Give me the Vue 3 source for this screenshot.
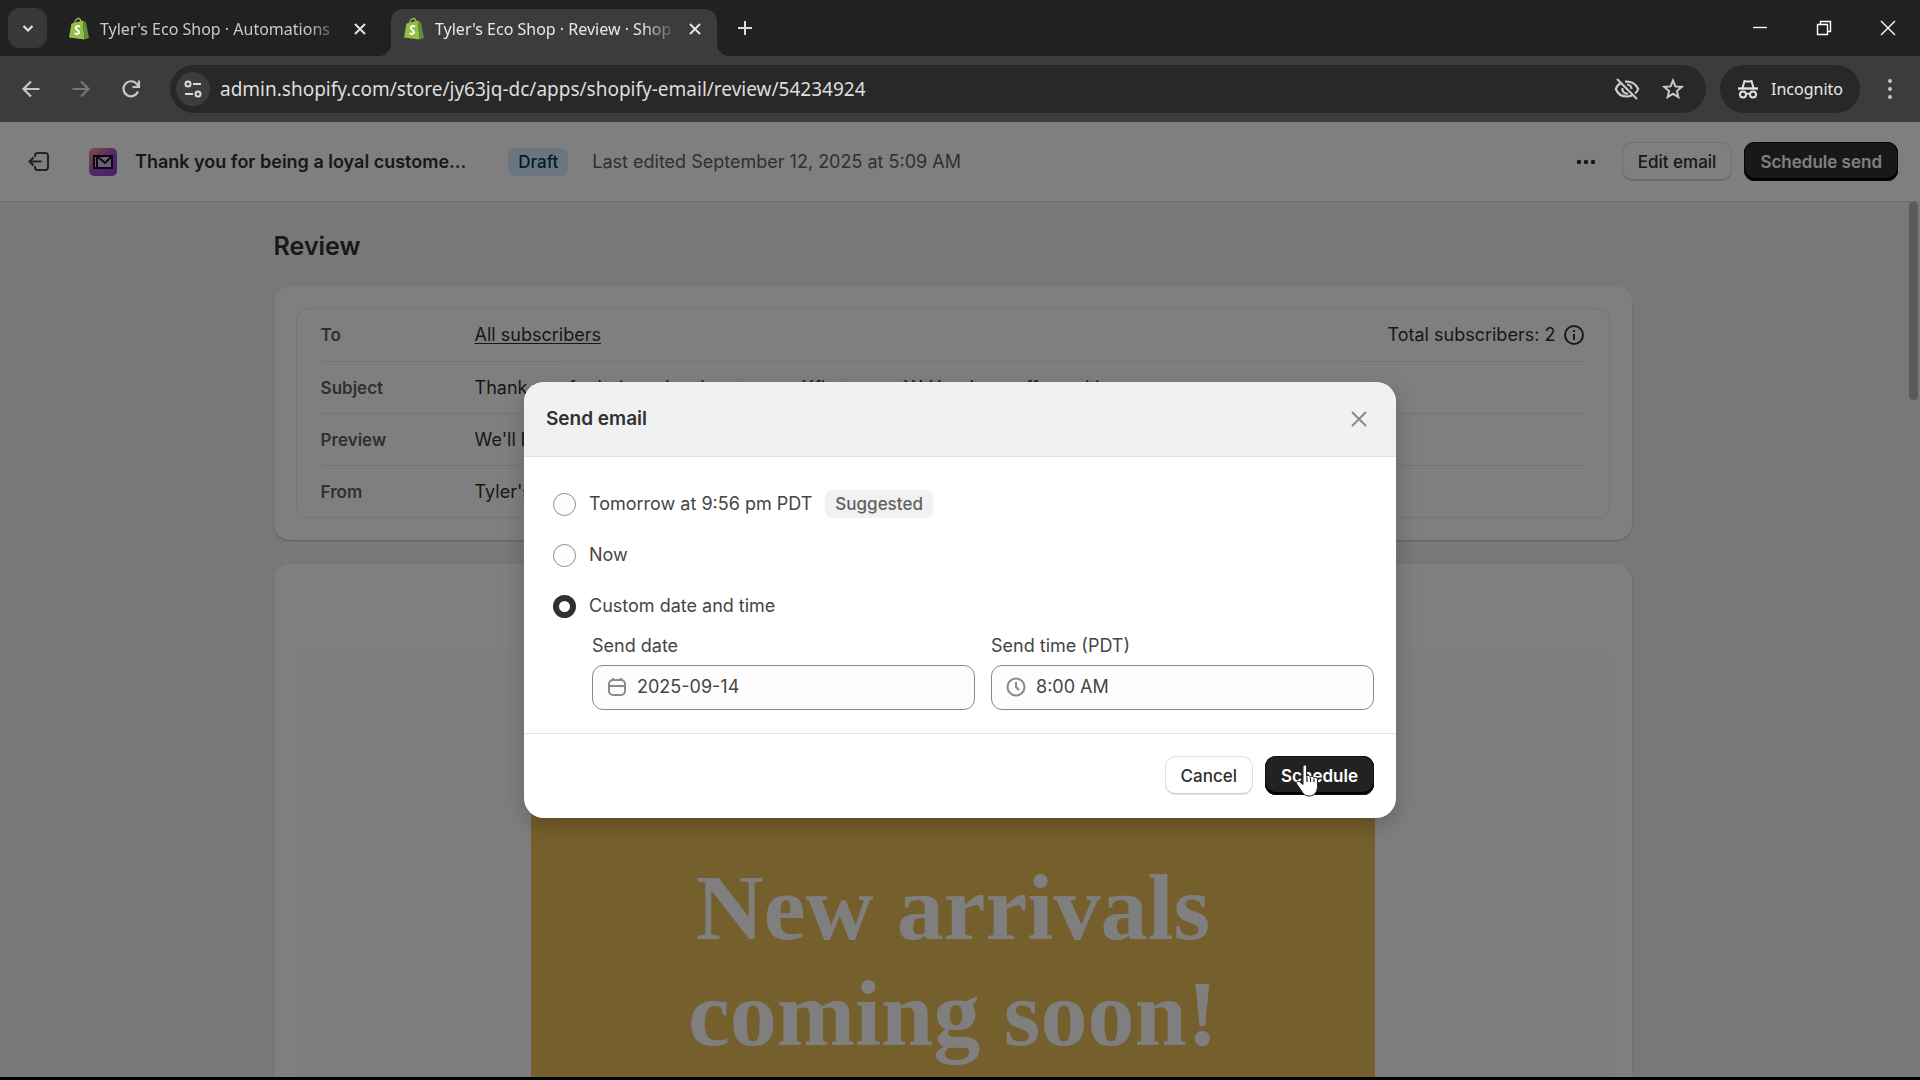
<template>
	<div class="window">
		<div class="tabstrip">
			<button class="tab-search" aria-label="Search tabs">
				<svg width="14" height="14" viewBox="0 0 14 14"><path d="M2.5 5l4.500 4.500L11.500 5" fill="none" stroke="#e3e3e3" stroke-width="2.200" /></svg>
			</button>
			<div v-for="tab in tabs" :key="tab.title" class="tab" :class="{ 'tab--active': tab.active }">
				<svg class="tab__favicon" width="22" height="24" viewBox="0 0 22 24">
					<path d="M3.500 6.500L15 3.500l1.500 19L1 20.500z" fill="#95bf47" />
					<path d="M15 3.500l3 2L21 21l-4.500 1.500z" fill="#5e8e3e" />
					<path d="M6.500 7c0-3 2-5.500 4-5.500 1.500 0 2.300 1.500 2.300 4" fill="none" stroke="#95bf47" stroke-width="1.300" />
					<path d="M12 9.500c-2-1-4.300-.3-4.300 1.500 0 2 3.300 2 3.300 4.200 0 1.900-2.400 2.200-4.200 1" fill="none" stroke="#fff" stroke-width="2" />
				</svg>
				<span class="tab__title">{{ tab.title }}</span>
				<button class="tab__close" aria-label="Close tab">
					<svg width="14" height="14" viewBox="0 0 14 14"><path d="M2 2l10 10M12 2L2 12" stroke="#e3e3e3" stroke-width="2" /></svg>
				</button>
			</div>
			<button class="new-tab" aria-label="New tab">
				<svg width="16" height="16" viewBox="0 0 16 16"><path d="M8 1v14M1 8h14" stroke="#dcdcdc" stroke-width="2" /></svg>
			</button>
			<div class="window-controls">
				<button aria-label="Minimize"><svg width="16" height="16" viewBox="0 0 16 16"><path d="M1 7.500h14" stroke="#fff" stroke-width="1.300" /></svg></button>
				<button aria-label="Restore"><svg width="16" height="16" viewBox="0 0 16 16"><path d="M1.500 4.500h10v10h-10zM4.500 4.500v-3h10v10h-3" fill="none" stroke="#fff" stroke-width="1.400" /></svg></button>
				<button aria-label="Close"><svg width="16" height="16" viewBox="0 0 16 16"><path d="M1 1l14 14M15 1L1 15" stroke="#fff" stroke-width="1.400" /></svg></button>
			</div>
		</div>

		<div class="toolbar">
			<button class="nav-button" aria-label="Back">
				<svg width="20" height="20" viewBox="0 0 20 20"><path d="M18.500 10H3M10 2.500L2.500 10l7.500 7.500" fill="none" stroke="#c7c7c7" stroke-width="2.200" /></svg>
			</button>
			<button class="nav-button" aria-label="Forward">
				<svg width="20" height="20" viewBox="0 0 20 20"><path d="M1.500 10H17M10 2.500l7.500 7.500-7.500 7.500" fill="none" stroke="#777" stroke-width="2.200" /></svg>
			</button>
			<button class="nav-button" aria-label="Reload">
				<svg width="20" height="20" viewBox="0 0 20 20"><path d="M17 12.500A7.500 7.500 0 1 1 15.800 5L18 7.500M18 1.500V8h-6.500" fill="none" stroke="#c7c7c7" stroke-width="2.200" /></svg>
			</button>
			<div class="omnibox">
				<button class="site-info" aria-label="View site information">
					<svg width="20" height="18" viewBox="0 0 20 18" fill="none" stroke="#dcdcdc" stroke-width="2"><circle cx="5" cy="4" r="2.500" /><path d="M10 4h8M2 14h8" /><circle cx="15" cy="14" r="2.500" /></svg>
				</button>
				<input class="omnibox__input" v-model="url" aria-label="Address" />
				<button class="omnibox__action" aria-label="Tracking protection">
					<svg width="26" height="24" viewBox="0 0 26 24" fill="none" stroke="#c9c9c9" stroke-width="2.200">
						<path d="M7.500 5.800C4.500 7.200 2.600 9.600 1.800 12c1.700 4.600 6.200 7.500 11.200 7.500 2 0 3.800-.5 5.300-1.200M11 4.700c6-.9 11.300 2.300 13.200 7.300-.6 1.700-1.700 3.300-3.200 4.500" />
						<path d="M13 7.500a4.500 4.500 0 0 1 4.500 4.500M8.500 11a4.500 4.500 0 0 0 5.500 5.500" />
						<path d="M3 2l20 20" />
					</svg>
				</button>
				<button class="omnibox__action" aria-label="Bookmark">
					<svg width="22" height="22" viewBox="0 0 22 22"><path d="M11 2.500l2.400 5.900 6.300.5-4.800 4.100 1.500 6.200-5.400-3.400-5.400 3.400 1.500-6.200-4.800-4.100 6.300-.5z" fill="none" stroke="#c9c9c9" stroke-width="2" /></svg>
				</button>
			</div>
			<button class="incognito">
				<svg width="22" height="22" viewBox="0 0 22 22" fill="none" stroke="#e3e3e3" stroke-width="2">
					<path d="M1 10.500h20" stroke-width="2.400" />
					<path d="M5.500 10L7.500 3l2 .6h3l2-.6 2 7" />
					<circle cx="6" cy="16.500" r="3" /><circle cx="16" cy="16.500" r="3" /><path d="M9 16.500c1-1 3-1 4 0" />
				</svg>
				Incognito
			</button>
			<button class="browser-menu" aria-label="Menu">
				<svg width="6" height="22" viewBox="0 0 6 22" fill="#c7c7c7"><circle cx="3" cy="3" r="2" /><circle cx="3" cy="11" r="2" /><circle cx="3" cy="19" r="2" /></svg>
			</button>
		</div>

		<div class="viewport">
			<header class="app-header">
				<button class="exit" aria-label="Exit">
					<svg width="24" height="24" viewBox="0 0 24 24" fill="none" stroke="#444" stroke-width="2"><path d="M8 7V5.500A2.500 2.500 0 0 1 10.500 3h8A2.500 2.500 0 0 1 21 5.500v12a2.500 2.500 0 0 1-2.500 2.500h-8A2.500 2.500 0 0 1 8 17.500V16M14.500 11.500H3M6.500 7.500l-4 4 4 4" /></svg>
				</button>
				<svg class="app-icon" width="28" height="28" viewBox="0 0 28 28">
					<defs>
						<linearGradient id="appIcon" x1="0" y1="0" x2="1" y2="1">
							<stop offset="0" stop-color="#ff9c78" /><stop offset="0.500" stop-color="#a854c8" /><stop offset="1" stop-color="#8a3fcf" />
						</linearGradient>
					</defs>
					<rect width="28" height="28" rx="5" fill="url(#appIcon)" />
					<path d="M5 8h18v12H5z" fill="#d7bfe8" stroke="#1c0d24" stroke-width="2" />
					<path d="M8 8v12M9 9l7 6 6-6" fill="none" stroke="#1c0d24" stroke-width="2" />
				</svg>
				<span class="app-header__title">Thank you for being a loyal custome...</span>
				<span class="badge badge--info">Draft</span>
				<span class="app-header__edited">Last edited September 12, 2025 at 5:09 AM</span>
				<button class="more" aria-label="More actions">
					<svg width="20" height="6" viewBox="0 0 20 6" fill="#303030"><circle cx="3" cy="3" r="2.200" /><circle cx="10" cy="3" r="2.200" /><circle cx="17" cy="3" r="2.200" /></svg>
				</button>
				<div class="app-header__actions">
					<button class="button">Edit email</button>
					<button class="button button--primary">Schedule send</button>
				</div>
			</header>

			<main class="page">
				<h1>Review</h1>
				<section class="card">
					<dl class="summary">
						<div v-for="row in rows" :key="row.label" class="summary__row">
							<dt>{{ row.label }}</dt>
							<dd>
								<a v-if="row.link" href="#">{{ row.value }}</a>
								<template v-else>{{ row.value }}</template>
							</dd>
							<dd v-if="row.total" class="summary__total">
								{{ row.total }}
								<svg width="22" height="22" viewBox="0 0 22 22" fill="none" stroke="#303030" stroke-width="2"><circle cx="11" cy="11" r="9" /><path d="M11 10v6M11 6v2" /></svg>
							</dd>
						</div>
					</dl>
				</section>
				<section class="card card--preview">
					<div class="preview">
						<div class="banner">
							<h2>New arrivals coming soon!</h2>
						</div>
					</div>
				</section>
			</main>

			<div class="scrollbar"></div>

			<div class="backdrop">
				<form class="modal" role="dialog" aria-labelledby="modal-title" @submit.prevent>
					<div class="modal__header">
						<h2 id="modal-title">Send email</h2>
						<button type="button" class="modal__close" aria-label="Close">
							<svg width="18" height="18" viewBox="0 0 18 18"><path d="M2 2l14 14M16 2L2 16" stroke="#8a8a8a" stroke-width="2" /></svg>
						</button>
					</div>
					<div class="modal__body">
						<label v-for="option in options" :key="option.value" class="choice">
							<input type="radio" name="send" :value="option.value" v-model="selected" />
							<span>{{ option.label }}</span>
							<span v-if="option.badge" class="badge">{{ option.badge }}</span>
						</label>
						<div class="fields">
							<div class="field">
								<label for="send-date">Send date</label>
								<div class="field__box">
									<svg width="20" height="20" viewBox="0 0 20 20" fill="none" stroke="#8a8a8a" stroke-width="2"><rect x="2" y="3" width="16" height="15" rx="4" /><path d="M2 9h16M6 1v2M14 1v2" /></svg>
									<input id="send-date" type="text" v-model="date" />
								</div>
							</div>
							<div class="field">
								<label for="send-time">Send time (PDT)</label>
								<div class="field__box">
									<svg width="20" height="20" viewBox="0 0 20 20" fill="none" stroke="#8a8a8a" stroke-width="2"><circle cx="10" cy="10" r="8.500" /><path d="M10 5v5l3 3" /></svg>
									<input id="send-time" type="text" v-model="time" />
								</div>
							</div>
						</div>
					</div>
					<div class="modal__footer">
						<button type="button" class="button">Cancel</button>
						<button type="submit" class="button button--primary">
							Schedule
							<svg class="cursor" width="26" height="34" viewBox="0 0 26 34">
								<path d="M8 3c0-1.300.8-2 1.800-2s1.800.7 1.800 2v9.500c.5-1.500 3.600-1.300 3.700.7.700-1.300 3.500-1 3.600.9.800-1.200 3.500-.8 3.600 1.300v6.100c0 6-2.500 10.500-8.300 10.500-4.400 0-6-2.200-7.700-5.200L1.600 19.900c-.9-1.900 1.300-3.400 3-2.200L8 20.500z" fill="#fff" stroke="#222" stroke-width="1" />
								<path d="M12 13v5M15.500 14v4M19 15v3" stroke="#222" stroke-width="1.200" />
							</svg>
						</button>
					</div>
				</form>
			</div>
		</div>
	</div>
</template>

<script setup>
	import {ref} from "vue";

	const tabs = [
		{title: "Tyler's Eco Shop · Automations", active: false},
		{title: "Tyler's Eco Shop · Review · Shop", active: true},
	];

	const rows = [
		{label: "To", value: "All subscribers", link: true, total: "Total subscribers: 2"},
		{label: "Subject", value: "Thank you for being a loyal customer, {{first_name}}! Here's an offer waiting"},
		{label: "Preview", value: "We'll be in touch soon"},
		{label: "From", value: "Tyler's Eco Shop"},
	];

	const options = [
		{value: "tomorrow", label: "Tomorrow at 9:56 pm PDT", badge: "Suggested"},
		{value: "now", label: "Now"},
		{value: "custom", label: "Custom date and time"},
	];

	const url = ref("admin.shopify.com/store/jy63jq-dc/apps/shopify-email/review/54234924");
	const selected = ref("custom");
	const date = ref("2025-09-14");
	const time = ref("8:00 AM");
</script>

<style>
	body {
		margin: 0;
		background: #000;
	}
</style>

<style scoped>
	* {
		box-sizing: border-box;
	}

	button {
		display: flex;
		align-items: center;
		justify-content: center;
		padding: 0;
		border: none;
		background: none;
		font-family: inherit;
	}

	svg {
		display: block;
		flex: none;
	}

	.window {
		display: flex;
		flex-direction: column;
		height: 100vh;
		border-bottom: 3px solid #000;
		overflow: hidden;
		font-family: "Inter", sans-serif;
	}

	/* browser chrome */
	.tabstrip {
		display: flex;
		height: 56px;
		padding-left: 8px;
		background: #212121;
		font-family: "Noto Sans", sans-serif;
	}

	.tab-search {
		width: 39px;
		height: 40px;
		margin-top: 8px;
		border-radius: 12px;
		background: #383838;
	}

	.tab {
		position: relative;
		display: flex;
		align-items: center;
		width: 326px;
		height: 47px;
		margin-top: 9px;
		padding: 0 12px 8px;
		color: #c9c9c9;
	}

	.tab:not(.tab--active) {
		margin: 9px 9px 0;
	}

	.tab--active {
		border-radius: 12px 12px 0 0;
		background: #3c3c3c;
		color: #e8e8e8;
	}

	.tab--active::before,
	.tab--active::after {
		content: "";
		position: absolute;
		bottom: 0;
		width: 12px;
		height: 12px;
	}

	.tab--active::before {
		right: 100%;
		background: radial-gradient(circle at 0 0, transparent 12px, #3c3c3c 12px);
	}

	.tab--active::after {
		left: 100%;
		background: radial-gradient(circle at 100% 0, transparent 12px, #3c3c3c 12px);
	}

	.tab__title {
		flex: 1;
		min-width: 0;
		margin-left: 10px;
		white-space: nowrap;
		font-size: 16px;
		line-height: 24px;
		mask-image: linear-gradient(to right, #000 88%, rgba(0, 0, 0, 0.2));
	}

	.tab__close {
		width: 20px;
		height: 20px;
		margin-left: 14px;
	}

	.new-tab {
		width: 32px;
		height: 40px;
		margin: 8px 0 0 12px;
	}

	.window-controls {
		display: flex;
		margin-left: auto;
	}

	.window-controls button {
		width: 64px;
		height: 56px;
	}

	.toolbar {
		display: flex;
		align-items: center;
		height: 66px;
		padding: 0 16px 0 6px;
		background: #3c3c3c;
		font-family: "Noto Sans", sans-serif;
	}

	.nav-button {
		width: 50px;
		height: 48px;
	}

	.omnibox {
		display: flex;
		flex: 1;
		align-items: center;
		height: 48px;
		margin-left: 14px;
		padding: 0 20px 0 6px;
		border-radius: 24px;
		background: #282828;
	}

	.site-info {
		width: 34px;
		height: 34px;
		border-radius: 50%;
		background: #3c3c3c;
	}

	.omnibox__input {
		flex: 1;
		min-width: 0;
		margin-left: 10px;
		padding: 0;
		border: none;
		outline: none;
		background: none;
		color: #dedede;
		font-family: inherit;
		font-size: 19px;
		line-height: 28px;
	}

	.omnibox__action {
		width: 26px;
		margin-left: 20px;
	}

	.incognito {
		gap: 12px;
		height: 48px;
		margin-left: 14px;
		padding: 0 17px;
		border-radius: 24px;
		background: #282828;
		color: #e8e8e8;
		font-size: 16px;
	}

	.browser-menu {
		width: 28px;
		height: 48px;
		margin-left: 16px;
	}

	/* page below the backdrop */
	.viewport {
		position: relative;
		display: flex;
		flex: 1;
		flex-direction: column;
		min-height: 0;
		overflow: hidden;
		background: #f1f1f1;
		color: #303030;
	}

	.app-header {
		display: flex;
		flex: none;
		align-items: center;
		height: 80px;
		padding: 0 22px 0 27px;
		border-bottom: 1px solid #dedede;
		background: #fff;
		font-size: 18px;
	}

	.app-icon {
		margin-left: 38px;
	}

	.app-header__title {
		margin-left: 18px;
		font-weight: 600;
	}

	.badge {
		padding: 0 10px;
		border-radius: 8px;
		background: #f1f1f1;
		color: #616161;
		font-size: 17px;
		font-weight: 500;
		line-height: 28px;
	}

	.badge--info {
		margin-left: 42px;
		background: #d5ebff;
		color: #003a5a;
	}

	.app-header__edited {
		margin-left: 24px;
		color: #616161;
	}

	.more {
		width: 40px;
		height: 40px;
		margin-left: auto;
	}

	.app-header__actions {
		display: flex;
		gap: 12px;
		margin-left: 16px;
	}

	.button {
		height: 39px;
		padding: 0 16px;
		border-radius: 11px;
		background: #fff;
		box-shadow: inset 0 0 0 1px #e3e3e3, inset 0 -2px 0 #ccc;
		color: #303030;
		font-size: 17px;
		font-weight: 500;
	}

	.button--primary {
		position: relative;
		background: #303030;
		box-shadow: inset 0 0 0 1px #111, inset 0 -2px 0 1px #000;
		color: #fff;
		font-weight: 600;
	}

	.modal .button--primary {
		background: #222;
	}

	.page {
		width: 71.5%;
		margin: 0 auto;
		padding: 28px 14px 0 0;
	}

	h1 {
		margin: 0;
		font-size: 25px;
		font-weight: 600;
		line-height: 32px;
	}

	.card {
		margin-top: 24px;
		padding: 22px;
		border-radius: 16px;
		background: #fff;
		box-shadow: 0 1px 2px #bbb;
	}

	.summary {
		margin: 0;
		padding: 0 24px;
		border: 1px solid #e8e8e8;
		border-radius: 12px;
		font-size: 18px;
		line-height: 24px;
	}

	.summary__row {
		display: flex;
		align-items: center;
		height: 52px;
	}

	.summary__row + .summary__row {
		border-top: 1px solid #e8e8e8;
	}

	dt {
		width: 154px;
		color: #616161;
		font-size: 17px;
		font-weight: 600;
	}

	dd {
		margin: 0;
	}

	dd a {
		color: inherit;
		text-underline-offset: 2px;
	}

	.summary__total {
		display: flex;
		align-items: center;
		gap: 8px;
		margin-left: auto;
	}

	.card--preview {
		padding-top: 85px;
	}

	.preview {
		padding: 11px 235px 0;
		background: #fdfdfd;
	}

	.banner {
		height: 700px;
		padding: 194px 140px 0;
		background: #ebbf5b;
		text-align: center;
	}

	.banner h2 {
		margin: 0;
		color: #fff;
		font-family: "Liberation Serif", serif;
		font-size: 94px;
		font-weight: 700;
		line-height: 106px;
	}

	.scrollbar {
		position: absolute;
		top: 80px;
		right: 2px;
		width: 9px;
		height: 198px;
		border-radius: 4px;
		background: #b5b5b5;
	}

	.backdrop {
		position: absolute;
		inset: 0;
		display: flex;
		align-items: center;
		justify-content: center;
		background: rgba(0, 0, 0, 0.5);
	}

	/* modal */
	.modal {
		width: 872px;
		border-radius: 20px;
		overflow: hidden;
		background: #fff;
		box-shadow: 0 8px 24px rgba(0, 0, 0, 0.2);
	}

	.modal__header {
		display: flex;
		align-items: center;
		justify-content: space-between;
		height: 75px;
		padding: 0 28px 0 22px;
		border-bottom: 1px solid #e3e3e3;
		background: #f1f1f1;
	}

	.modal__header h2 {
		margin: 0;
		font-size: 19px;
		font-weight: 600;
	}

	.modal__body {
		padding: 22px 22px 23px;
		color: #454545;
		font-size: 18px;
		line-height: 24px;
	}

	.choice {
		display: flex;
		align-items: center;
		height: 51px;
		padding-left: 7px;
	}

	.choice input {
		appearance: none;
		width: 23px;
		height: 23px;
		margin: 0 13px 0 0;
		border: 1px solid #8a8a8a;
		border-radius: 50%;
		background: #fdfdfd;
	}

	.choice input:checked {
		border: 6px solid #303030;
	}

	.choice .badge {
		margin-left: 13px;
	}

	.fields {
		display: grid;
		grid-template-columns: 1fr 1fr;
		gap: 16px;
		margin-top: 2px;
		padding-left: 46px;
	}

	.field__box {
		display: flex;
		align-items: center;
		gap: 10px;
		height: 45px;
		margin-top: 7px;
		padding: 0 14px;
		border: 1px solid #8a8a8a;
		border-radius: 11px;
		background: #fdfdfd;
	}

	.field__box input {
		flex: 1;
		min-width: 0;
		padding: 0;
		border: none;
		outline: none;
		background: none;
		color: #454545;
		font-family: inherit;
		font-size: 18px;
		line-height: 24px;
	}

	.modal__footer {
		display: flex;
		align-items: center;
		justify-content: flex-end;
		gap: 12px;
		height: 85px;
		padding: 0 22px;
		border-top: 1px solid #e3e3e3;
	}

	.cursor {
		position: absolute;
		top: 8px;
		left: 30px;
	}
</style>
